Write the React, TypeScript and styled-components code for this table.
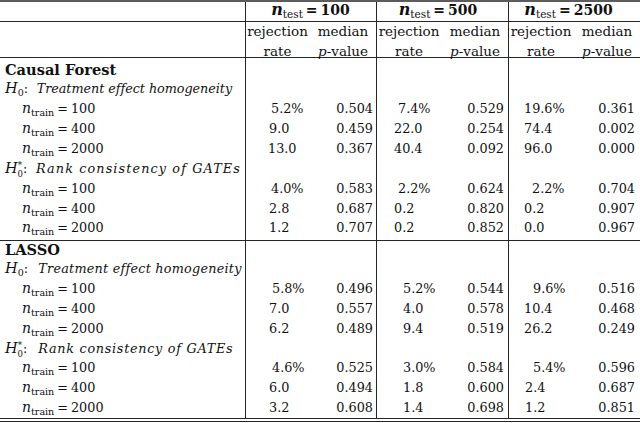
import React, { useLayoutEffect, useRef, useState } from 'react';
import styled, { createGlobalStyle } from 'styled-components';

const GlobalStyle = createGlobalStyle`
  html, body {
    margin: 0;
    padding: 0;
    background: #fff;
  }
  body {
    font-family: "DejaVu Serif", "Liberation Serif", serif;
    font-size: 12.8px;
    color: #111;
  }
`;

const LINE = '#262626';
const COLS = '245px 65px 66px 66px 66px 66px 66px';

const Table = styled.div`
  width: 640px;
  border-top: 2px solid #5c5c5c;
  border-bottom: 1px solid ${LINE};
  background-image: linear-gradient(${LINE}, ${LINE}), linear-gradient(${LINE}, ${LINE}),
    linear-gradient(${LINE}, ${LINE});
  background-size: 1px 100%;
  background-repeat: no-repeat;
  background-position: 245px 0, 376px 0, 508px 0;
`;

const BottomRule = styled.div`
  width: 640px;
  margin-top: 2px;
  border-top: 1px solid ${LINE};
`;

const HeadTop = styled.div`
  display: grid;
  grid-template-columns: ${COLS};
  height: 19px;
  border-bottom: 1px solid ${LINE};
`;

const HeadSub = styled.div`
  display: grid;
  grid-template-columns: ${COLS};
  height: 35px;
  border-bottom: 1px solid ${LINE};
`;

const Section = styled.div<{ $pt: number; $pb: number; $rowH: number; $last?: boolean }>`
  display: grid;
  grid-template-columns: ${COLS};
  grid-auto-rows: ${(p) => p.$rowH}px;
  line-height: ${(p) => p.$rowH}px;
  margin-top: ${(p) => Math.min(p.$pt, 0)}px;
  padding-top: ${(p) => Math.max(p.$pt, 0)}px;
  padding-bottom: ${(p) => p.$pb}px;
  border-bottom: ${(p) => (p.$last ? 'none' : `1px solid ${LINE}`)};
`;

const Head = styled.div<{ $pr?: number }>`
  grid-column: span 2;
  text-align: center;
  font-size: 14px;
  line-height: 17px;
  padding-right: ${(p) => p.$pr ?? 0}px;
  white-space: nowrap;
`;

const Stack = styled.div`
  display: flex;
  flex-direction: column;
  justify-content: center;
  align-items: center;
  font-size: 13.5px;
  line-height: 19.5px;
`;

const Wide = styled.div`
  grid-column: 1 / -1;
  padding-left: 5px;
  white-space: nowrap;
`;

const Label = styled.div`
  padding-left: 22px;
  white-space: nowrap;
`;

const Rate = styled.div<{ $x: number }>`
  padding-left: ${(p) => p.$x}px;
  white-space: nowrap;
`;

const Median = styled.div<{ $pr: number }>`
  text-align: right;
  padding-right: ${(p) => p.$pr}px;
`;

const Title = styled.span`
  font-weight: bold;
  font-size: 14.6px;
`;

const Var = styled.i<{ $size?: number }>`
  font-size: ${(p) => p.$size ?? 14}px;
  line-height: 1;
`;

const BoldVar = styled.b`
  font-style: italic;
  font-size: 16px;
  line-height: 1;
`;

const Sub = styled.span<{ $size?: number; $drop?: number; $back?: number }>`
  font-size: ${(p) => p.$size ?? 9.5}px;
  line-height: 0;
  vertical-align: ${(p) => -(p.$drop ?? 3)}px;
  margin-left: ${(p) => -(p.$back ?? 0)}px;
`;

const Sup = styled.span`
  font-size: 8.5px;
  line-height: 0;
  vertical-align: 5.5px;
`;

const Eq = styled.span<{ $bold?: boolean }>`
  margin: 0 3px;
  font-weight: ${(p) => (p.$bold ? 'bold' : 'normal')};
`;

const HypMark = styled.span<{ $w: number }>`
  display: inline-block;
  width: ${(p) => p.$w}px;
`;

const Phrase = styled.i``;

const Big = styled.b`
  font-size: 14px;
`;

type Line = {
  n: string;
  v: [string, string, string, string, string, string];
  x: [number, number, number];
};

type Block = {
  kind: 'h0' | 'h0star';
  w: number;
  span: number;
  lines: Line[];
};

type Group = {
  title: string;
  pt: number;
  pb: number;
  rowH: number;
  blocks: Block[];
};

const groups: Group[] = [
  {
    title: 'Causal Forest',
    pt: 1.6,
    pb: 1.75,
    rowH: 19.85,
    blocks: [
      {
        kind: 'h0',
        w: 31.7,
        span: 195,
        lines: [
          { n: '100', v: ['5.2%', '0.504', '7.4%', '0.529', '19.6%', '0.361'], x: [26, 22, 16] },
          { n: '400', v: ['9.0', '0.459', '22.0', '0.254', '74.4', '0.002'], x: [24, 18, 16] },
          { n: '2000', v: ['13.0', '0.367', '40.4', '0.092', '96.0', '0.000'], x: [23, 18, 16] },
        ],
      },
      {
        kind: 'h0star',
        w: 31,
        span: 205,
        lines: [
          { n: '100', v: ['4.0%', '0.583', '2.2%', '0.624', '2.2%', '0.704'], x: [26, 22, 24] },
          { n: '400', v: ['2.8', '0.687', '0.2', '0.820', '0.2', '0.907'], x: [24, 18, 16] },
          { n: '2000', v: ['1.2', '0.707', '0.2', '0.852', '0.0', '0.967'], x: [24, 18, 16] },
        ],
      },
    ],
  },
  {
    title: 'LASSO',
    pt: -1.36,
    pb: 0.16,
    rowH: 19.8,
    blocks: [
      {
        kind: 'h0',
        w: 33.3,
        span: 203,
        lines: [
          { n: '100', v: ['5.8%', '0.496', '5.2%', '0.544', '9.6%', '0.516'], x: [27, 27, 25] },
          { n: '400', v: ['7.0', '0.557', '4.0', '0.578', '10.4', '0.468'], x: [24, 27, 16] },
          { n: '2000', v: ['6.2', '0.489', '9.4', '0.519', '26.2', '0.249'], x: [24, 27, 16] },
        ],
      },
      {
        kind: 'h0star',
        w: 33.3,
        span: 195,
        lines: [
          { n: '100', v: ['4.6%', '0.525', '3.0%', '0.584', '5.4%', '0.596'], x: [27, 27, 25] },
          { n: '400', v: ['6.0', '0.494', '1.8', '0.600', '2.4', '0.687'], x: [24, 27, 17] },
          { n: '2000', v: ['3.2', '0.608', '1.4', '0.698', '1.2', '0.851'], x: [24, 27, 17] },
        ],
      },
    ],
  },
];

const tests = [
  { n: '100', pr: 0 },
  { n: '500', pr: 8 },
  { n: '2500', pr: 11 },
];

const MEDIAN_PAD = [3, 4, 5];

// spread the italic phrase so it spans the same width as in the typeset original
const FitPhrase = ({ text, span }: { text: string; span: number }) => {
  const ref = useRef<HTMLElement>(null);
  const [spacing, setSpacing] = useState<number | null>(null);
  useLayoutEffect(() => {
    const el = ref.current;
    if (!el) return;
    const w = el.getBoundingClientRect().width;
    if (w > 0) setSpacing((span - w) / text.length);
  }, [span, text]);
  return (
    <Phrase ref={ref} style={spacing !== null ? { letterSpacing: `${spacing}px` } : undefined}>
      {text}
    </Phrase>
  );
};

const Hypothesis = ({ block }: { block: Block }) => (
  <Wide>
    <HypMark $w={block.w}>
      <Var $size={14.5}>H</Var>
      {block.kind === 'h0' ? (
        <Sub>0</Sub>
      ) : (
        <>
          <Sup>*</Sup>
          <Sub $size={8.5} $drop={4.5} $back={4.3}>
            0
          </Sub>
        </>
      )}
      :
    </HypMark>
    <FitPhrase
      span={block.span}
      text={block.kind === 'h0' ? 'Treatment effect homogeneity' : 'Rank consistency of GATEs'}
    />
  </Wide>
);

const DataRow = ({ line }: { line: Line }) => (
  <>
    <Label>
      <Var>n</Var>
      <Sub>train</Sub>
      <Eq>=</Eq>
      {line.n}
    </Label>
    {[0, 1, 2].map((k) => (
      <React.Fragment key={k}>
        <Rate $x={line.x[k]}>{line.v[k * 2]}</Rate>
        <Median $pr={MEDIAN_PAD[k]}>{line.v[k * 2 + 1]}</Median>
      </React.Fragment>
    ))}
  </>
);

export default function App() {
  return (
    <>
      <GlobalStyle />
      <Table>
        <HeadTop>
          <div />
          {tests.map((t) => (
            <Head key={t.n} $pr={t.pr}>
              <BoldVar>n</BoldVar>
              <Sub $size={10.5}>test</Sub>
              <Eq $bold>=</Eq>
              <Big>{t.n}</Big>
            </Head>
          ))}
        </HeadTop>
        <HeadSub>
          <div />
          {tests.map((t) => (
            <React.Fragment key={t.n}>
              <Stack>
                <span>rejection</span>
                <span>rate</span>
              </Stack>
              <Stack>
                <span>median</span>
                <span>
                  <i>p</i>-value
                </span>
              </Stack>
            </React.Fragment>
          ))}
        </HeadSub>
        {groups.map((g, gi) => (
          <Section
            key={g.title}
            $pt={g.pt}
            $pb={g.pb}
            $rowH={g.rowH}
            $last={gi === groups.length - 1}
          >
            <Wide>
              <Title>{g.title}</Title>
            </Wide>
            {g.blocks.map((b) => (
              <React.Fragment key={b.kind}>
                <Hypothesis block={b} />
                {b.lines.map((l) => (
                  <DataRow key={l.n} line={l} />
                ))}
              </React.Fragment>
            ))}
          </Section>
        ))}
      </Table>
      <BottomRule />
    </>
  );
}
